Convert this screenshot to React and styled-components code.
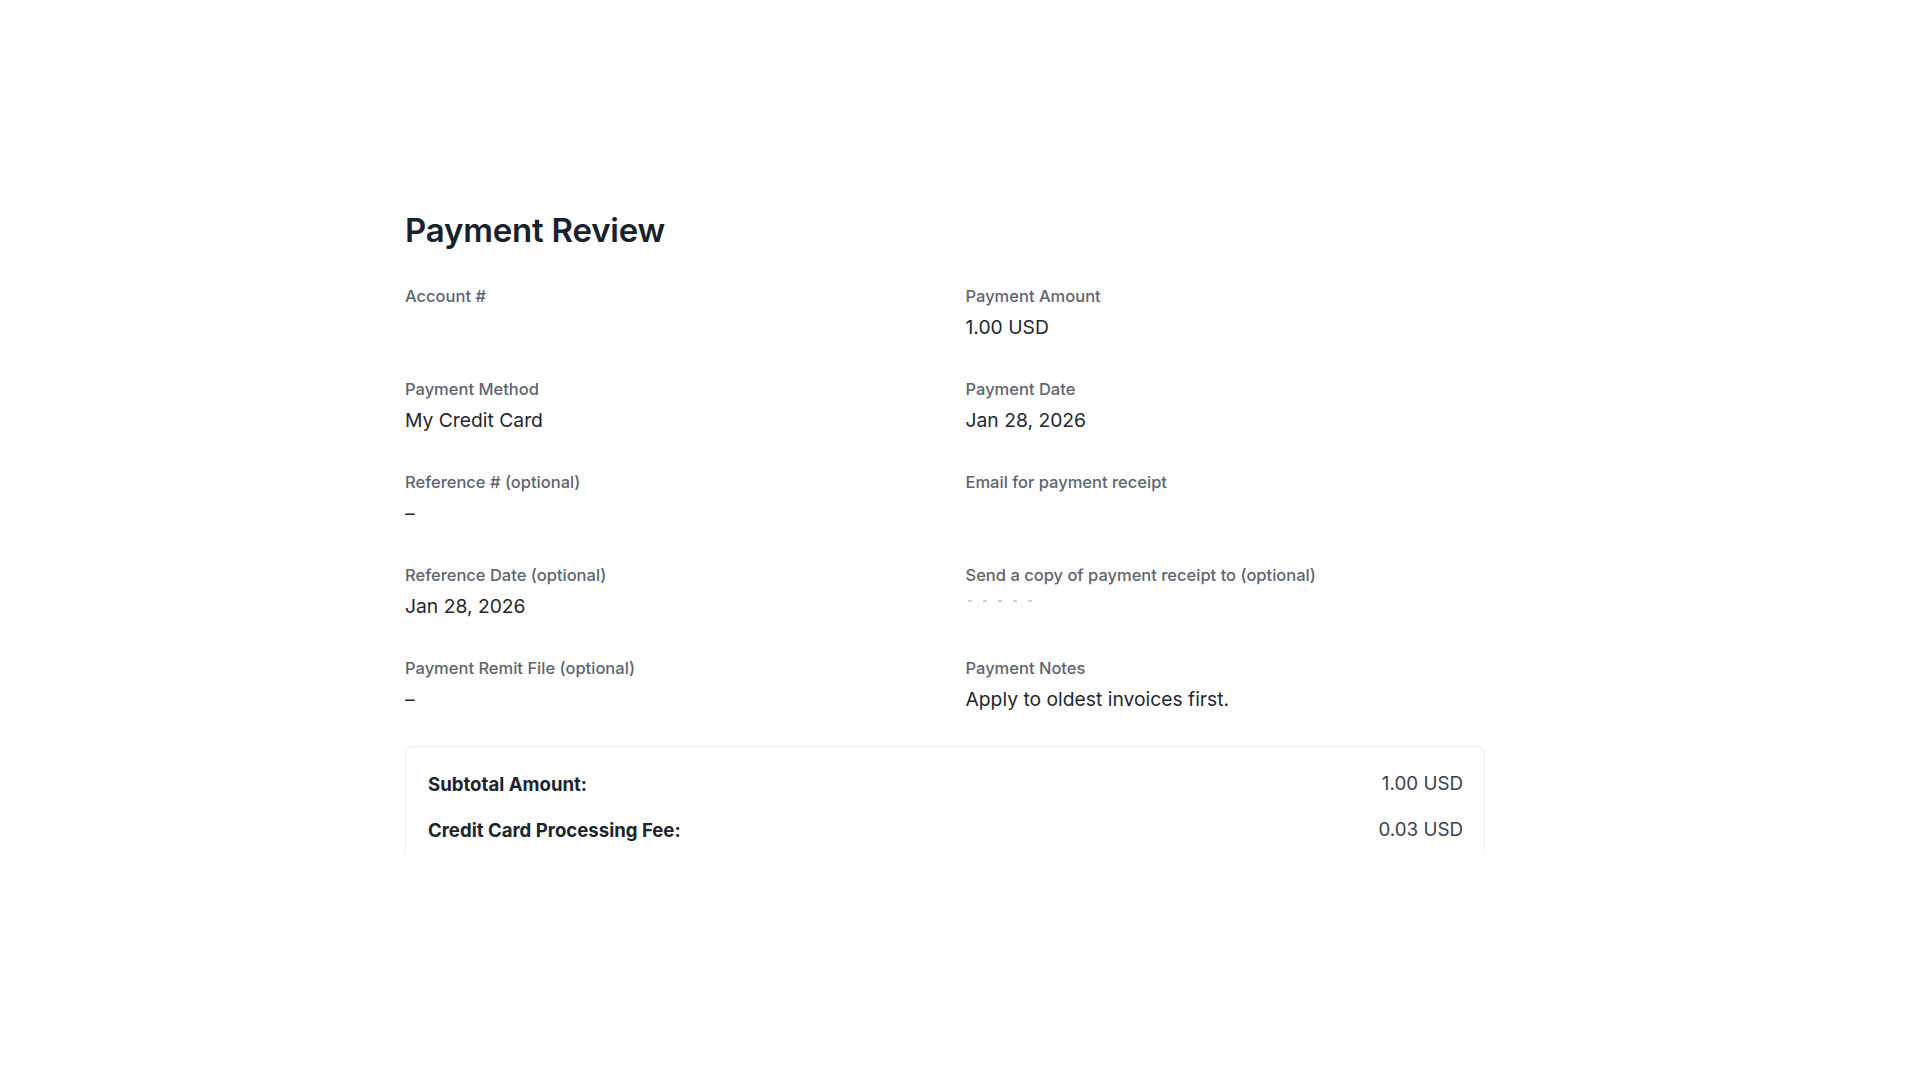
import React from 'react';
import styled, { createGlobalStyle } from 'styled-components';

const GlobalStyle = createGlobalStyle`
    html, body {
        margin: 0;
        padding: 0;
        background: #ffffff;
    }
    body {
        font-family: Inter, "Noto Sans", "Liberation Sans", sans-serif;
        -webkit-font-smoothing: antialiased;
    }
`;

// the screenshot is cut off just under the fee row
const Viewport = styled.div`
    height: 853px;
    overflow: hidden;
`;

const Page = styled.main`
    padding: 210px 0 0 405px;
    width: 1080px;
`;

const Title = styled.h1`
    color: #18222e;
    font-size: 33px;
    font-weight: 600;
    letter-spacing: -0.2px;
    line-height: 40px;
    margin: 0 0 34px;
`;

const FieldGrid = styled.div`
    column-gap: 41px;
    display: grid;
    grid-template-columns: 1fr 1fr;
    row-gap: 36px;
`;

const Field = styled.div`
    display: flex;
    flex-direction: column;
    gap: 5px;
    min-width: 0;
`;

const Label = styled.span`
    color: #5d6470;
    font-size: 16.5px;
    font-weight: 500;
    line-height: 24px;
`;

const Value = styled.span`
    color: #1e2732;
    font-size: 19.3px;
    font-weight: 400;
    height: 28px;
    line-height: 28px;
    overflow: hidden;
    white-space: nowrap;
`;

// only the top edge of this value is visible in the screenshot
const FadedValue = styled.span`
    background: repeating-linear-gradient(90deg, #cdd1d6 0 4px, transparent 4px 15px);
    height: 2px;
    margin: 8px 0 18px 2px;
    width: 66px;
`;

const Summary = styled.section`
    border: 1px solid #eceef1;
    border-radius: 8px;
    display: flex;
    flex-direction: column;
    gap: 20px;
    margin-top: 33px;
    padding: 24px 21px 60px 22px;
`;

const SummaryRow = styled.div`
    align-items: center;
    display: flex;
    justify-content: space-between;
    line-height: 26px;
`;

const SummaryLabel = styled.span`
    color: #1c242e;
    font-size: 18.6px;
    font-weight: 700;
`;

const SummaryValue = styled.span`
    color: #3a414b;
    font-size: 18.8px;
    font-weight: 400;
`;

const fields = [
    { label: 'Account #', value: '' },
    { label: 'Payment Amount', value: '1.00 USD' },
    { label: 'Payment Method', value: 'My Credit Card' },
    { label: 'Payment Date', value: 'Jan 28, 2026' },
    { label: 'Reference # (optional)', value: '–' },
    { label: 'Email for payment receipt', value: '' },
    { label: 'Reference Date (optional)', value: 'Jan 28, 2026' },
    { label: 'Send a copy of payment receipt to (optional)', faded: true },
    { label: 'Payment Remit File (optional)', value: '–' },
    { label: 'Payment Notes', value: 'Apply to oldest invoices first.' },
];

const summary = [
    { label: 'Subtotal Amount:', value: '1.00 USD' },
    { label: 'Credit Card Processing Fee:', value: '0.03 USD' },
];

const App = () => {
    return (
        <Viewport>
            <GlobalStyle />
            <Page>
                <Title>Payment Review</Title>
                <FieldGrid>
                    {fields.map(f => (
                        <Field key={f.label}>
                            <Label>{f.label}</Label>
                            {f.faded ? <FadedValue /> : <Value>{f.value}</Value>}
                        </Field>
                    ))}
                </FieldGrid>
                <Summary>
                    {summary.map(s => (
                        <SummaryRow key={s.label}>
                            <SummaryLabel>{s.label}</SummaryLabel>
                            <SummaryValue>{s.value}</SummaryValue>
                        </SummaryRow>
                    ))}
                </Summary>
            </Page>
        </Viewport>
    );
};

export default App;
